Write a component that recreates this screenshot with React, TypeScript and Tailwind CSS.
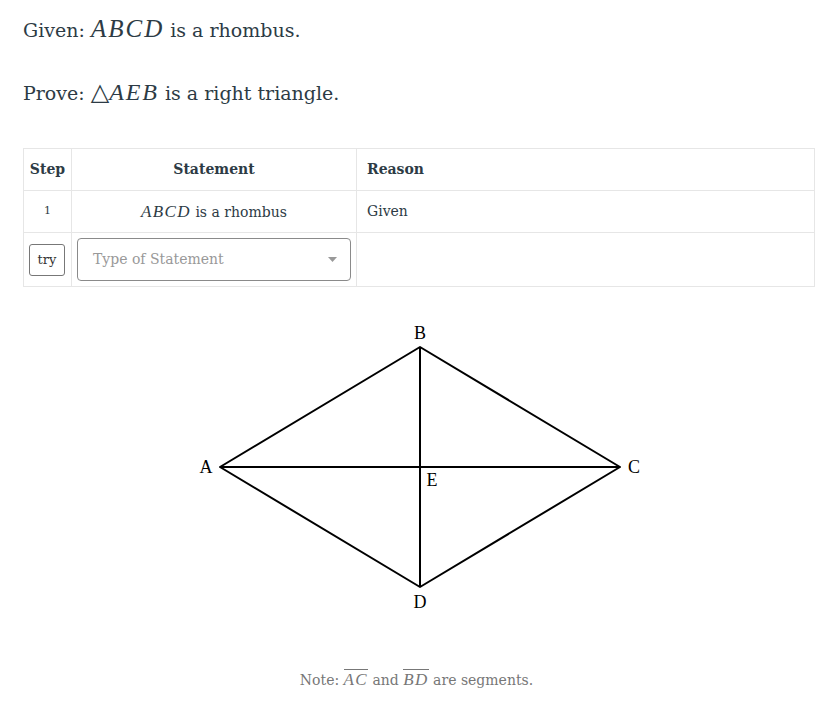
import React from 'react'

const times = { fontFamily: '"Liberation Serif", "Times New Roman", serif' }

function M({ children }: { children: React.ReactNode }) {
  return <span className="italic tracking-[0.08em]" style={times}>{children}</span>
}

function Rhombus() {
  return (
    <svg width="460" height="300" viewBox="0 0 460 300" className="block">
      <g stroke="#000" strokeWidth="2" fill="none" strokeLinejoin="round">
        <polygon points="30,152 230,32 430,152 230,272" />
        <line x1="30" y1="152" x2="430" y2="152" />
        <line x1="230" y1="32" x2="230" y2="272" />
      </g>
      <g fill="#000" fontSize="18" style={times} textAnchor="middle">
        <text x="230" y="24">B</text>
        <text x="16" y="158">A</text>
        <text x="444" y="158">C</text>
        <text x="242" y="171">E</text>
        <text x="230" y="293">D</text>
      </g>
    </svg>
  )
}

export default function App() {
  return (
    <div className="min-h-[712px] bg-white px-[23px] pt-[14px] text-[#2d3b45]" style={{ fontFamily: '"DejaVu Serif", "Liberation Serif", serif' }}>
      <p className="text-[19px] leading-[30px]">
        Given: <span className="text-[25px]"><M>ABCD</M></span> is a rhombus.
      </p>
      <p className="mt-[32px] text-[19px] leading-[30px]">
        Prove: <span className="text-[24px]">△<M>AEB</M></span> is a right triangle.
      </p>

      <table className="mt-[40px] w-[792px] border-collapse text-[14px]">
        <thead>
          <tr className="h-[42px]">
            <th className="w-[48px] border border-[#e6e6e6] text-center font-bold">Step</th>
            <th className="w-[285px] border border-[#e6e6e6] text-center font-bold">Statement</th>
            <th className="border border-[#e6e6e6] px-[10px] text-left font-bold">Reason</th>
          </tr>
        </thead>
        <tbody>
          <tr className="h-[42px]">
            <td className="border border-[#e6e6e6] text-center text-[11px]">1</td>
            <td className="border border-[#e6e6e6] text-center">
              <span className="text-[17px]"><M>ABCD</M></span> is a rhombus
            </td>
            <td className="border border-[#e6e6e6] px-[10px]">Given</td>
          </tr>
          <tr className="h-[54px]">
            <td className="border border-[#e6e6e6] px-[5px]">
              <button className="flex h-[32px] w-[36px] items-center justify-center rounded-[3px] border border-[#777] bg-white text-[13px] text-[#333]">
                try
              </button>
            </td>
            <td className="border border-[#e6e6e6] px-[5px]">
              <div className="flex h-[43px] items-center justify-between rounded-[4px] border border-[#8a8a8a] pl-[15px] pr-[13px]">
                <span className="text-[14px] text-[#999]">Type of Statement</span>
                <svg width="9" height="5" viewBox="0 0 9 5"><path d="M0 0h9L4.5 5z" fill="#999" /></svg>
              </div>
            </td>
            <td className="border border-[#e6e6e6]"></td>
          </tr>
        </tbody>
      </table>

      <div className="mt-[28px] flex justify-center pl-[6px]">
        <Rhombus />
      </div>

      <p className="mt-[54px] text-center text-[14px] text-[#777]">
        Note: <span className="inline-block border-t border-[#777] pt-[1px] text-[17px] leading-[17px]"><M>AC</M></span> and{' '}
        <span className="inline-block border-t border-[#777] pt-[1px] text-[17px] leading-[17px]"><M>BD</M></span> are segments.
      </p>
    </div>
  )
}
